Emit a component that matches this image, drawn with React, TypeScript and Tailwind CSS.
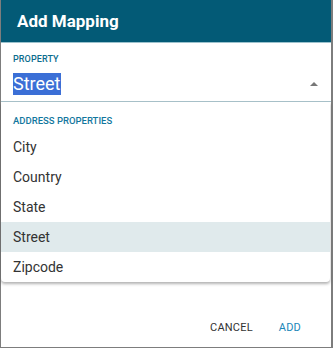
const items = ["City", "Country", "State", "Street", "Zipcode"];

export default function App() {
  return (
    <div
      className="relative w-[333px] h-[348px] bg-white overflow-hidden"
      style={{ fontFamily: "Roboto, 'Liberation Sans', sans-serif" }}
    >
      <div className="flex flex-col h-full border-l border-r-2 border-b border-[#7d7d7d] bg-white">
        <div className="h-[42px] shrink-0 bg-[#035a76] flex items-center pl-[16px]">
          <h1 className="text-[17px] font-bold text-white leading-none">Add Mapping</h1>
        </div>
        <div className="h-px bg-[#9cc2cd]" />

        <div className="h-[59px] border-b border-[#a9c3cb] pl-[12px] pr-[12px] pt-[12px]">
          <div className="text-[9px] font-medium leading-none text-[#0b6c8c] tracking-[0.1px]">
            PROPERTY
          </div>
          <div className="flex items-center justify-between mt-[9px] h-[22px]">
            <span className="text-[18px] leading-[22px] text-white bg-[#3b6fd6]">Street</span>
            <svg width="8" height="4" viewBox="0 0 8 4" className="mr-[1px]">
              <path d="M0 4 L4 0 L8 4 Z" fill="#777" />
            </svg>
          </div>
        </div>

        <div className="mt-auto flex justify-end items-center gap-[26px] pr-[30px] pb-[11px]">
          <button className="text-[11px] font-normal text-[#333] uppercase tracking-[0.2px]">Cancel</button>
          <button className="text-[11px] font-normal text-[#1a86b8] uppercase tracking-[0.2px]">Add</button>
        </div>
      </div>

      {/* dropdown menu */}
      <div className="absolute left-[1px] right-[3px] top-[102px] bg-white rounded-b-[4px] shadow-[0_2px_3px_rgba(0,0,0,0.3)] pt-[14px] pb-[0px]">
        <div className="px-[12px] text-[9.5px] font-medium text-[#12779e] leading-none h-[16px]">
          ADDRESS PROPERTIES
        </div>
        {items.map((item) => (
          <div
            key={item}
            className={
              item === "Street"
                ? "h-[30px] flex items-center px-[12px] text-[14px] text-[#333] bg-[#e0eaec]"
                : "h-[30px] flex items-center px-[12px] text-[14px] text-[#333]"
            }
          >
            {item}
          </div>
        ))}
      </div>
    </div>
  );
}
